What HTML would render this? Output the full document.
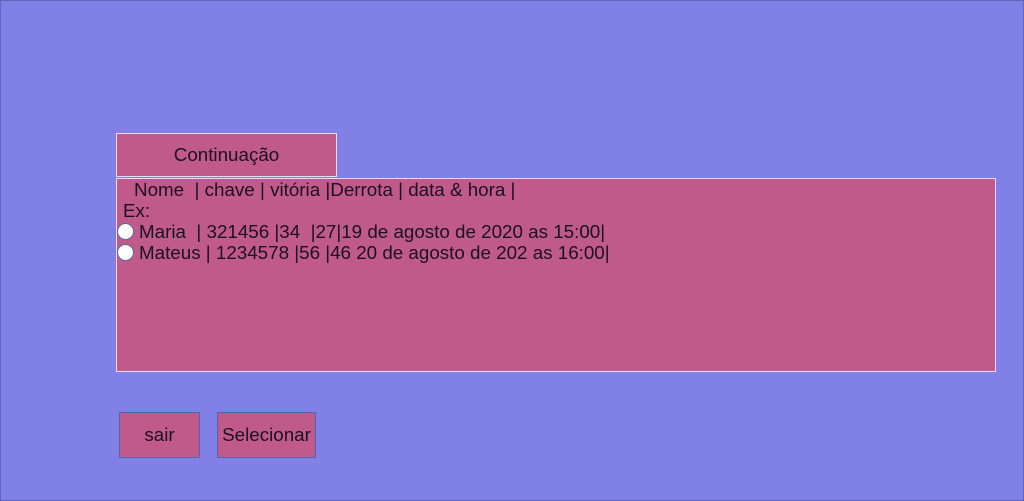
<!DOCTYPE html>
<html><head><meta charset="utf-8"><style>
body{margin:0;width:1024px;height:501px;background:#8080e6;font-family:"Liberation Sans",sans-serif;font-size:18.8px;color:#1a1020;position:relative;overflow:hidden;border:1px solid #5a6ab8;box-sizing:border-box}
.b{position:absolute;background:#c05a8a;box-sizing:border-box}
.t{position:absolute;white-space:pre;line-height:21px}
.r{position:absolute;width:17px;height:17px;border-radius:50%;background:#fff;border:1px solid #5a6aa0;box-sizing:border-box}
</style></head><body>
<div class="b" style="left:115px;top:132px;width:221px;height:44px;border:1px solid #e8d8f0;text-align:center;line-height:42px">Continuação</div>
<div class="b" style="left:115px;top:177px;width:880px;height:194px;border:1px solid #e8d8f0"></div>
<div class="t" style="left:133px;top:178px">Nome  | chave | vitória |Derrota | data &amp; hora |</div>
<div class="t" style="left:122px;top:199px">Ex:</div>
<div class="r" style="left:116px;top:222px"></div>
<div class="t" style="left:138px;top:220px">Maria  | 321456 |34  |27|19 de agosto de 2020 as 15:00|</div>
<div class="r" style="left:116px;top:243px"></div>
<div class="t" style="left:138px;top:241px">Mateus | 1234578 |56 |46 20 de agosto de 202 as 16:00|</div>
<div class="b" style="left:118px;top:411px;width:81px;height:46px;border:1px solid #4a6ab0;text-align:center;line-height:44px">sair</div>
<div class="b" style="left:216px;top:411px;width:99px;height:46px;border:1px solid #4a6ab0;text-align:center;line-height:44px">Selecionar</div>
</body></html>
